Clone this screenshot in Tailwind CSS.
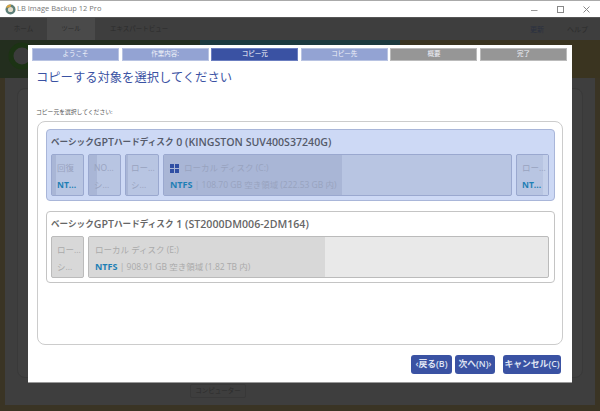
<!DOCTYPE html>
<html lang="ja"><head><meta charset="utf-8">
<script src="https://cdn.jsdelivr.net/npm/@tailwindcss/browser@4"></script>
</head>
<body class="w-[600px] h-[411px] overflow-hidden relative bg-[#3e3e3e] font-['Open_Sans','Noto_Sans_CJK_JP',sans-serif]">
<div class="h-[18px] bg-white border-t border-t-[#aaa] border-b border-b-[#555] flex items-center pl-[5px] relative">
  <svg width="11" height="11" viewBox="0 0 11 11" class="mr-[1px]"><circle cx="5.5" cy="5.5" r="5" fill="#5d7f78"/><circle cx="5.5" cy="5.5" r="2.6" fill="#e2dccb"/><path d="M1 4a5 5 0 0 1 5-3.4L5.5 3z" fill="#d9a441"/></svg>
  <span class="text-[7.5px] text-[#777] leading-none">LB Image Backup 12 Pro</span>
  <div class="absolute right-0 top-0 h-[16px] flex items-center">
    <svg width="7" height="7" viewBox="0 0 7 7" class="mr-[19px]"><path d="M0 4.5h6.5" stroke="#999" fill="none"/></svg>
    <svg width="7" height="7" viewBox="0 0 7 7" class="mr-[19px]"><rect x=".5" y=".5" width="6" height="6" stroke="#888" fill="none"/></svg>
    <svg width="7" height="7" viewBox="0 0 7 7" class="mr-[10px]"><path d="M.5.5l6 6M6.5.5l-6 6" stroke="#888" fill="none"/></svg>
  </div>
</div>
<!-- dimmed app -->
<div class="h-[22px] flex items-center text-[6.5px] text-[#2c2c2c] leading-none bg-[#3e3e3e]">
  <div class="w-[47px] h-full flex items-center justify-center">ホーム</div>
  <div class="w-[48px] h-full flex items-center justify-center bg-[#4a4a4a]">ツール</div>
  <div class="ml-[15px] w-[56px] h-full flex items-center whitespace-nowrap">エキスパートビュー</div>
  <div class="ml-auto mr-[12px] flex gap-[23px]"><span class="text-[#2a3040] text-[7px]">更新</span><span class="text-[7px]">ヘルプ</span></div>
</div>
<!-- color band -->
<div class="h-[38px] flex relative">
  <div class="w-[200px] bg-[#232e1e] relative"><svg width="28" height="28" viewBox="0 0 28 28" class="absolute left-[8px] top-[2px]"><circle cx="14" cy="14" r="11" fill="#3c3c3c" stroke="#1c3314" stroke-width="5"/></svg></div>
  <div class="w-[200px] bg-[#1c3a40]"></div>
  <div class="w-[200px] bg-[#3a3420]"></div>
</div>
<!-- main content with brown frame -->
<div class="h-[333px] border-x-[5px] border-b-[6px] border-x-[#3a3424] border-b-[#3a3424] pt-[10px] px-[12px]">
  <div class="h-[290px] border border-[#393939] rounded-[8px] bg-[#404040]"></div>
</div>
<div class="absolute left-[190px] top-[384px] w-[56px] h-[14px] border border-[#383838] rounded-[2px] flex items-center justify-center text-[6.5px] text-[#2c2c2c] leading-none whitespace-nowrap">コンピューター</div>
<!-- dialog -->
<div class="absolute left-[28px] top-[45px] w-[544px] h-[338px] bg-white flex flex-col pl-[4px] pr-[5px] pt-[3px] border-b border-[#999]">
  <div class="flex justify-between h-[13px] text-[6.5px] leading-none text-[#f0f2f9] shrink-0">
    <div class="w-[87px] bg-[#93a3d3] border border-[#b8c3e2] flex items-center justify-center">ようこそ</div>
    <div class="w-[87px] bg-[#93a3d3] border border-[#b8c3e2] flex items-center justify-center">作業内容:</div>
    <div class="w-[87px] bg-[#3a52a3] border border-[#6b7ec0] flex items-center justify-center text-white">コピー元</div>
    <div class="w-[87px] bg-[#93a3d3] border border-[#b8c3e2] flex items-center justify-center">コピー先</div>
    <div class="w-[87px] bg-[#969696] border border-[#bbb] flex items-center justify-center">概要</div>
    <div class="w-[87px] bg-[#969696] border border-[#bbb] flex items-center justify-center">完了</div>
  </div>
  <h1 class="mt-[8px] ml-[4px] h-[18px] text-[12.3px] leading-[18px] text-[#3a52a3] font-normal">コピーする対象を選択してください</h1>
  <p class="mt-[20px] ml-[4px] h-[10px] text-[5.8px] leading-[10px] text-[#555]">コピー元を選択してください:</p>
  <!-- panel -->
  <div class="mt-[4px] ml-[5px] w-[526px] h-[224px] shrink-0 border border-[#ccc] rounded-[8px] pl-[8px] pr-[7px] pt-[7px] flex flex-col gap-[10px]">
    <!-- disk 0 -->
    <div class="h-[72px] bg-[#cdd9f5] border border-[#a9b6d9] rounded-[4px] px-[4px] flex flex-col">
      <div class="h-[24px] flex items-center text-[10.6px] font-semibold text-[#555b6b] leading-none whitespace-nowrap"><span class="text-[8.6px]">ベーシック</span>GPT<span class="text-[8.6px]">ハードディスク</span>&nbsp;0 (KINGSTON SUV400S37240G)</div>
      <div class="flex gap-[4px] h-[42px]">
        <div class="w-[33px] bg-[#b8c5e2] border border-[#9aa8cf] rounded-[2px] relative text-[8.5px] leading-[10px]"><div class="absolute left-0 top-0 bottom-0 w-[4px] bg-[#a9b6d6]"></div><div class="relative pl-[5px] pt-[8px] text-[#98a3bf]">回復</div><div class="relative pl-[5px] pt-[7px] font-bold text-[#1e7fb5]">NT...</div></div>
        <div class="w-[33px] bg-[#b8c5e2] border border-[#9aa8cf] rounded-[2px] relative text-[8.5px] leading-[10px]"><div class="absolute left-0 top-0 bottom-0 w-[8px] bg-[#a9b6d6]"></div><div class="relative pl-[5px] pt-[8px] text-[#98a3bf]">NO...</div><div class="relative pl-[5px] pt-[7px] text-[#98a3bf]">シ...</div></div>
        <div class="w-[34px] bg-[#b8c5e2] border border-[#9aa8cf] rounded-[2px] relative text-[8.5px] leading-[10px]"><div class="absolute left-0 top-0 bottom-0 w-[2px] bg-[#a9b6d6]"></div><div class="relative pl-[5px] pt-[8px] text-[#98a3bf]">ロー...</div><div class="relative pl-[5px] pt-[7px] text-[#98a3bf]">シ...</div></div>
        <div class="w-[349px] bg-[#b8c5e2] border border-[#9aa8cf] rounded-[2px] relative text-[8.5px] leading-[10px] whitespace-nowrap"><div class="absolute left-0 top-0 bottom-0 w-[178px] bg-[#a9b6d6]"></div>
          <div class="relative pl-[6px] pt-[8px] flex items-center text-[#98a3bf]"><svg width="9" height="9" viewBox="0 0 9 9" class="mr-[5px]"><path d="M0 0h4v4H0zM5 0h4v4H5zM0 5h4v4H0zM5 5h4v4H5z" fill="#2f4ea3"/></svg>ローカル ディスク (C:)</div>
          <div class="relative pl-[6px] pt-[7px] text-[#98a3bf]"><b class="text-[#1e7fb5] font-bold text-[9px]">NTFS</b> | 108.70 GB 空き領域 (222.53 GB 内)</div>
        </div>
        <div class="w-[33px] bg-[#b8c5e2] border border-[#9aa8cf] rounded-[2px] relative text-[8.5px] leading-[10px]"><div class="absolute right-0 top-0 bottom-0 w-[5px] bg-[#c4d0ea]"></div><div class="relative pl-[5px] pt-[8px] text-[#98a3bf]">ロー...</div><div class="relative pl-[5px] pt-[7px] font-bold text-[#1e7fb5]">NT...</div></div>
      </div>
    </div>
    <!-- disk 1 -->
    <div class="h-[72px] bg-white border border-[#c4c4c4] rounded-[4px] px-[4px] flex flex-col">
      <div class="h-[24px] flex items-center text-[10.6px] font-semibold text-[#666] leading-none whitespace-nowrap"><span class="text-[8.6px]">ベーシック</span>GPT<span class="text-[8.6px]">ハードディスク</span>&nbsp;1 (ST2000DM006-2DM164)</div>
      <div class="flex gap-[4px] h-[42px]">
        <div class="w-[33px] bg-[#d8d8d8] border border-[#bbb] rounded-[2px] text-[8.5px] leading-[10px] text-[#aaa]"><div class="pl-[5px] pt-[8px]">ロー...</div><div class="pl-[5px] pt-[7px]">シ...</div></div>
        <div class="w-[461px] bg-[#e9e9e9] border border-[#bbb] rounded-[2px] relative text-[8.5px] leading-[10px] whitespace-nowrap"><div class="absolute left-0 top-0 bottom-0 w-[236px] bg-[#d8d8d8]"></div>
          <div class="relative pl-[6px] pt-[8px] text-[#aaa]">ローカル ディスク (E:)</div>
          <div class="relative pl-[6px] pt-[7px] text-[#aaa]"><b class="text-[#1e7fb5] font-bold text-[9px]">NTFS</b> | 908.91 GB 空き領域 (1.82 TB 内)</div>
        </div>
      </div>
    </div>
  </div>
  <!-- buttons -->
  <div class="mt-[10px] flex justify-end pr-[6px] text-[8.8px] leading-none text-[#dfe4f3] font-semibold">
    <div class="w-[41px] h-[19px] bg-[#3a52a3] rounded-[3px] flex items-center justify-center whitespace-nowrap">‹戻る(B)</div>
    <div class="ml-[3px] w-[40px] h-[19px] bg-[#3a52a3] rounded-[3px] flex items-center justify-center whitespace-nowrap">次へ(N)›</div>
    <div class="ml-[8px] w-[58px] h-[19px] bg-[#3a52a3] rounded-[3px] flex items-center justify-center whitespace-nowrap">キャンセル(C)</div>
  </div>
</div>
</body></html>
